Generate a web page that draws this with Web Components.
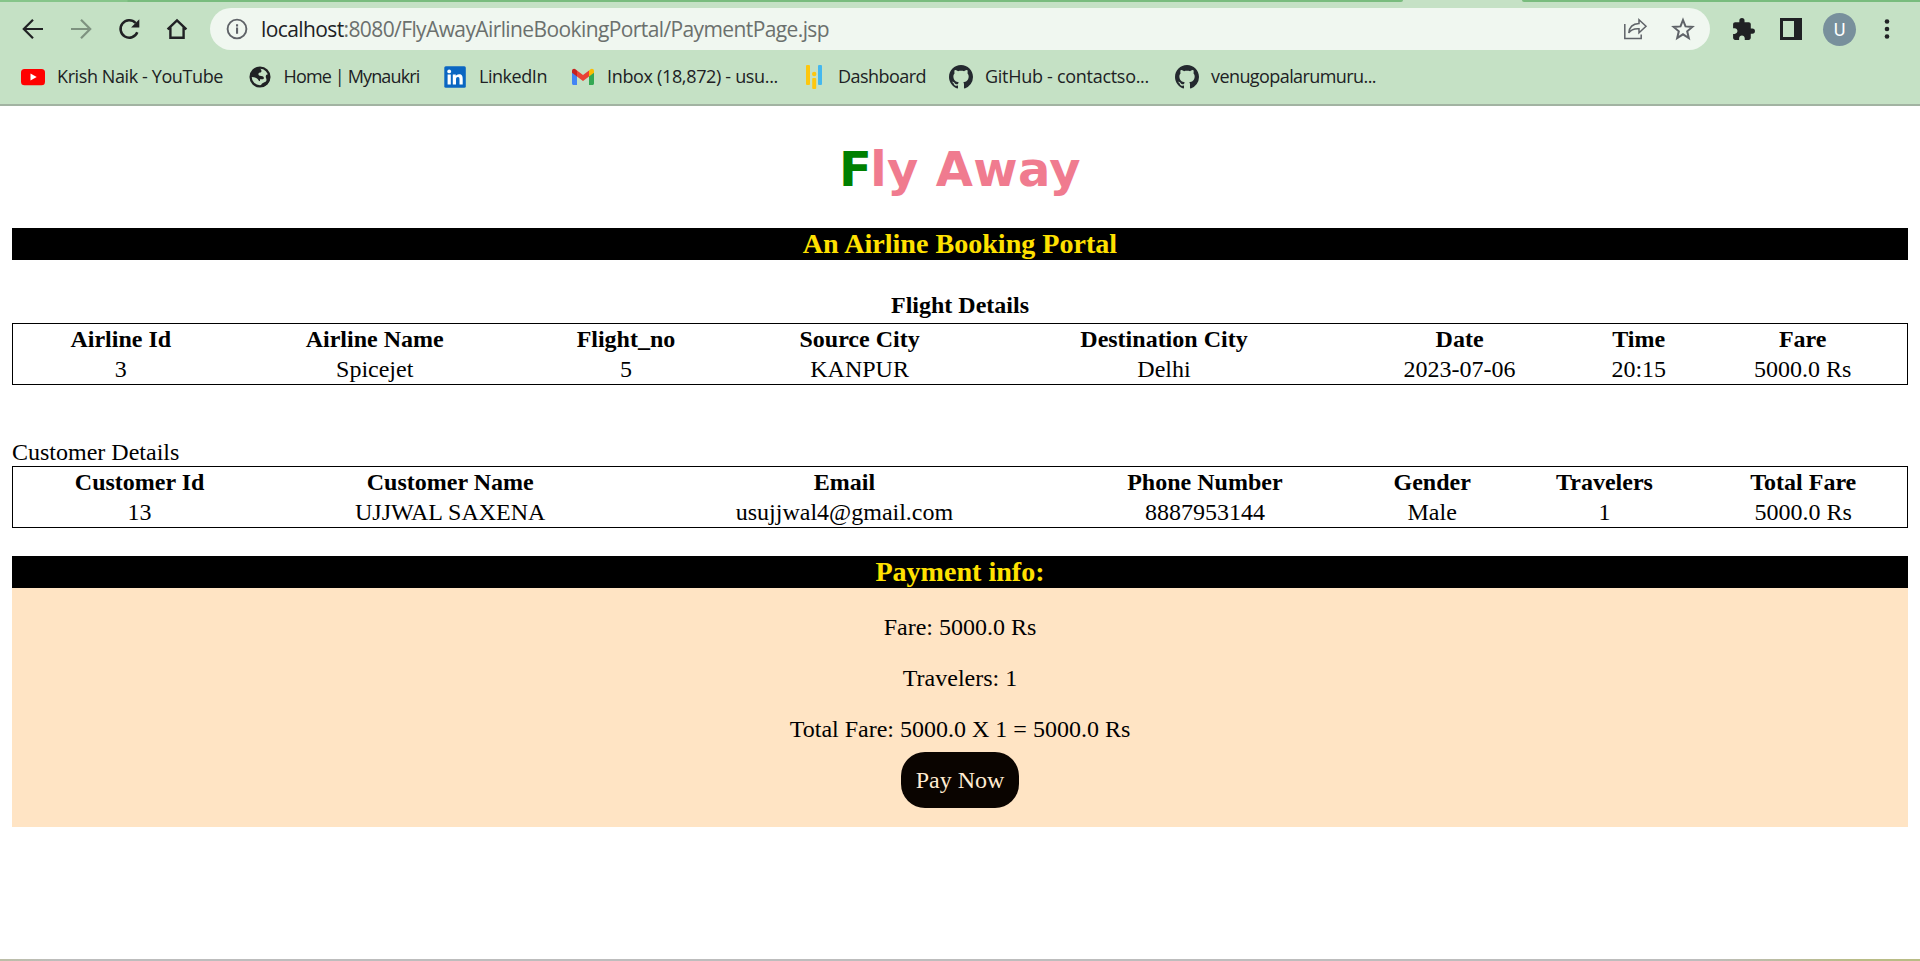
<!DOCTYPE html>
<html lang="en">
<head>
<meta charset="utf-8">
<title>Fly Away</title>
<style>
html,body{margin:0;height:100%}
body{display:flex;flex-direction:column;overflow:hidden;background:#fff;color:#000;font-family:"Liberation Serif","Times New Roman",serif}
</style>
</head>
<body>
<browser-chrome></browser-chrome>
<payment-page></payment-page>
<window-edge></window-edge>
<script>
const ICONS = {
  back:'<svg width="24" height="24" viewBox="0 0 24 24" fill="none" stroke="#202124" stroke-width="2.2"><path d="M22 12H3.2M12 2.8L2.8 12l9.2 9.2"/></svg>',
  forward:'<svg width="24" height="24" viewBox="0 0 24 24" fill="none" stroke="#7e9280" stroke-width="2.2"><path d="M2 12h18.8M12 2.8l9.2 9.2-9.2 9.2"/></svg>',
  reload:'<svg width="24" height="24" viewBox="0 0 24 24"><path d="M20.3 15.3A8.7 8.7 0 1 1 18.6 6" fill="none" stroke="#202124" stroke-width="2.5"/><path d="M22.3 2.3v8.2h-8.2z" fill="#202124"/></svg>',
  home:'<svg width="24" height="24" viewBox="0 0 24 24" fill="none" stroke="#202124" stroke-width="2.4"><path d="M2.6 12.4L12 3.4l9.4 9M5.4 10.5v10.3h13.2V10.5"/></svg>',
  info:'<svg width="24" height="24" viewBox="0 0 24 24"><circle cx="12" cy="12" r="9.4" fill="none" stroke="#5f6368" stroke-width="1.9"/><path d="M11 10.6h2.1v6.2H11zM11 7.2h2.1v2.2H11z" fill="#5f6368"/></svg>',
  share:'<svg width="26" height="26" viewBox="0 0 26 26" fill="none" stroke="#5f6368" stroke-width="1.5"><path d="M2.8 8v14.6h16.4v-4.2"/><path d="M17 3.8l7 6.5-7 6.5v-4.1c-4.800-.3-8.200.8-10.200 4.300.4-5.800 4.200-9.200 10.200-9.500z"/></svg>',
  star:'<svg width="26" height="26" viewBox="0 0 26 26" fill="none" stroke="#5f6368" stroke-width="2"><path d="M13 4l2.500 6.400 6.900.5-5.200 4.400 1.600 6.700L13 18.300 7.200 22l1.600-6.700-5.200-4.400 6.900-.5z"/></svg>',
  puzzle:'<svg width="25" height="25" viewBox="0 0 24 24" fill="#202124"><path d="M20.500 11H19V7c0-1.100-.9-2-2-2h-4V3.500a2.500 2.500 0 0 0-5 0V5H4c-1.100 0-1.990.9-1.990 2v3.800H3.500c1.490 0 2.700 1.210 2.700 2.700s-1.210 2.700-2.700 2.700H2V20c0 1.100.9 2 2 2h3.800v-1.500c0-1.490 1.210-2.700 2.700-2.700s2.700 1.210 2.700 2.700V22H17c1.100 0 2-.9 2-2v-4h1.500a2.500 2.500 0 0 0 0-5z"/></svg>',
  panel:'<svg width="22" height="22" viewBox="0 0 22 22"><path fill="#202124" fill-rule="evenodd" d="M0 0h22v22H0zM3 3v16h11V3z"/></svg>',
  dots:'<svg width="6" height="24" viewBox="0 0 6 24" fill="#202124"><circle cx="3" cy="4.500" r="2.300"/><circle cx="3" cy="12" r="2.300"/><circle cx="3" cy="19.500" r="2.300"/></svg>',
  youtube:'<svg width="24" height="24" viewBox="0 0 24 24"><rect y="4" width="24" height="16.200" rx="3.500" fill="#f00"/><path d="M9.500 8.600v7l6.200-3.500z" fill="#fff"/></svg>',
  globe:'<svg width="24" height="24" viewBox="0 0 24 24"><circle cx="12" cy="12" r="9.400" fill="none" stroke="#202124" stroke-width="2.300"/><path fill="#202124" d="M11 2.500C6 3 2.500 7 2.500 12c2.500-.2 5 .3 6.500 1.500 1.500 1 1 2.200 3 2.700v-2h3c1.500-.5 1-2.500-.5-3-2-.6-3.500 0-4-1.500-.3-1.200.4-2 1.500-2.200 1.500-.2 1.600-1 1.300-2.200-.3-1.200-1-1.600-2.300-2.800zM21 9.500c-1.500-.5-3 .2-3.200 1.700-.3 1.500.8 2.300.7 3.800-.1 1.600-1.400 2-2.500 2.500-1.500.6-3 1.500-3.500 4C17.500 22 22 18 21.500 12z"/></svg>',
  linkedin:'<svg width="24" height="24" viewBox="0 0 24 24"><rect x="1.300" y="1.300" width="21.500" height="21.500" rx="1.500" fill="#0a66c2"/><g fill="#fff"><circle cx="6.200" cy="6.400" r="1.900"/><path d="M4.600 9.600h3.200v10H4.600zM9.800 9.600h3v1.400c.6-1 1.700-1.700 3.200-1.700 3.100 0 3.700 2 3.700 4.700v5.600h-3.200v-5c0-1.200 0-2.600-1.600-2.600s-1.900 1.200-1.900 2.500v5.100H9.800z"/></g></svg>',
  gmail:'<svg width="24" height="24" viewBox="0 0 24 24"><path d="M1 7v11.500c0 .9.700 1.500 1.500 1.500H6v-9.500z" fill="#4285f4"/><path d="M18 10.500V20h3.500c.9 0 1.500-.7 1.500-1.500V7z" fill="#34a853"/><path d="M18 5.600v5.900L23 7.800V6c0-2-2.200-3-3.800-1.500z" fill="#fbbc04"/><path d="M6 11.500V5.600l6 4.500 6-4.500v5.900l-6 4.500z" fill="#ea4335"/><path d="M1 6v1.800l5 3.700V5.600L4.800 4.500C3.200 3.200 1 4 1 6z" fill="#c5221f"/></svg>',
  dash:'<svg width="24" height="24" viewBox="0 0 24 24"><g fill="#fdc70f"><rect x="4" y="0" width="4" height="20" rx="1"/><circle cx="12.200" cy="9" r="2.200"/><rect x="10.200" y="13" width="4" height="11" rx="1"/></g><rect x="16" y="0" width="4" height="20" rx="1" fill="#44b8ef"/></svg>',
  github:'<svg width="24" height="24" viewBox="0 0 16 16" fill="#24292f"><path d="M8 0C3.580 0 0 3.580 0 8c0 3.540 2.290 6.530 5.470 7.590.4.070.55-.17.55-.38 0-.19-.01-.82-.01-1.490-2.010.37-2.530-.49-2.690-.94-.09-.23-.48-.94-.82-1.130-.28-.15-.68-.52-.01-.53.63-.01 1.080.58 1.230.82.72 1.210 1.870.87 2.330.66.070-.52.28-.87.51-1.070-1.780-.2-3.640-.89-3.640-3.950 0-.87.31-1.590.82-2.150-.08-.2-.36-1.020.08-2.120 0 0 .67-.21 2.200.82.64-.18 1.320-.27 2-.27s1.360.09 2 .27c1.530-1.040 2.200-.82 2.200-.82.44 1.100.16 1.920.08 2.120.51.56.82 1.270.82 2.150 0 3.070-1.870 3.750-3.650 3.950.29.25.54.73.54 1.480 0 1.070-.01 1.930-.01 2.200 0 .21.15.46.55.38A8.010 8.010 0 0 0 16 8c0-4.420-3.580-8-8-8z"/></svg>'
};

function define(name, html, setup){
  customElements.define(name, class extends HTMLElement{
    connectedCallback(){
      if(this.shadowRoot) return;
      this.attachShadow({mode:'open'}).innerHTML = html;
      if(setup) setup.call(this, this.shadowRoot);
    }
  });
}

define('ui-icon', '<style>:host{display:flex;flex:none}svg{display:block}</style><div></div>', function(root){
  root.querySelector('div').innerHTML = ICONS[this.getAttribute('name')];
});

/* One line of text, tracked so that it fills the width given in its attribute. */
define('fit-text', '<style>:host{display:block;flex:none;white-space:nowrap}span{display:inline-block}</style><span><slot></slot></span>', function(root){
  const span = root.querySelector('span');
  const gap = this.getAttribute('width') - span.getBoundingClientRect().width;
  span.style.letterSpacing = (gap / this.textContent.length) + 'px';
});

define('bookmark-link', `<style>
:host{display:flex;align-items:center;color:#202124;font:18px/24px "Open Sans",sans-serif}
ui-icon{margin-right:12px}
slot{display:block;padding-bottom:2px}
</style><ui-icon></ui-icon><slot></slot>`, function(root){
  const old = root.querySelector('ui-icon'), icon = document.createElement('ui-icon');
  icon.setAttribute('name', this.getAttribute('icon'));
  old.replaceWith(icon);
});

define('tab-edge', `<style>
:host{display:flex;justify-content:space-between;height:2px;background:#c5e1c5}
i{background:#79bc7e}
.l{width:1403px;background:linear-gradient(90deg,#86c58a 127px,#79bc7e 128px);border-radius:0 0 3px 0}
.r{width:398px;border-radius:0 0 0 3px}
</style><i class="l"></i><i class="r"></i>`);

define('address-bar', `<style>
:host{display:flex;align-items:center;box-sizing:border-box;width:1500px;height:42px;border-radius:21px;background:#f0f7f0;padding:0 14px 0 15px;font:21px/28px "Open Sans",sans-serif;color:#6b706d}
b{font-weight:400;color:#202124}
fit-text{margin:0 auto 0 12px}
.share{margin-right:22px}
</style><ui-icon name="info"></ui-icon><fit-text width="568"><b>localhost</b>:8080/FlyAwayAirlineBookingPortal/PaymentPage.jsp</fit-text><ui-icon class="share" name="share"></ui-icon><ui-icon name="star"></ui-icon>`);

define('browser-chrome', `<style>
:host{display:block;flex:none;height:106px;box-sizing:border-box;border-bottom:2px solid #a2b3a2;background:#c5e1c5}
.nav{display:flex;align-items:center;height:54px;padding:0 30px 0 21px}
.nav>.n{margin-right:24px}
.nav>.h{margin-right:21px}
.tools{display:flex;align-items:center;margin-left:21px}
.avatar{width:33px;height:33px;margin:0 28px 0 21px;border-radius:50%;background:#78909c;color:#fff;text-align:center;font:18px/33px Roboto,sans-serif}
.marks{display:grid;grid-template-columns:226.500px 195.500px 128px 231px 147px 226px 240px;height:42px;padding-left:21px}
</style>
<tab-edge></tab-edge>
<div class="nav">
<ui-icon class="n" name="back"></ui-icon><ui-icon class="n" name="forward"></ui-icon><ui-icon class="n" name="reload"></ui-icon><ui-icon class="h" name="home"></ui-icon>
<address-bar></address-bar>
<div class="tools"><ui-icon name="puzzle"></ui-icon><ui-icon name="panel" style="margin-left:24px"></ui-icon><div class="avatar">U</div><ui-icon name="dots"></ui-icon></div>
</div>
<div class="marks">
<bookmark-link icon="youtube"><fit-text width="166">Krish Naik - YouTube</fit-text></bookmark-link>
<bookmark-link icon="globe"><fit-text width="136">Home | Mynaukri</fit-text></bookmark-link>
<bookmark-link icon="linkedin"><fit-text width="68">LinkedIn</fit-text></bookmark-link>
<bookmark-link icon="gmail"><fit-text width="171">Inbox (18,872) - usu...</fit-text></bookmark-link>
<bookmark-link icon="dash"><fit-text width="88">Dashboard</fit-text></bookmark-link>
<bookmark-link icon="github"><fit-text width="164">GitHub - contactso...</fit-text></bookmark-link>
<bookmark-link icon="github"><fit-text width="165">venugopalarumuru...</fit-text></bookmark-link>
</div>`);

define('section-bar', '<style>:host{display:block;height:32px;background:#000;color:#ffe100;text-align:center;font-weight:700;font-size:28.080px;line-height:32px}</style><slot></slot>');

define('detail-table', `<style>
:host{display:block;box-sizing:border-box;height:62px;border:1px solid #000;font-size:24px;line-height:30px}
.row{display:grid;grid-template-columns:var(--cols);text-align:center;white-space:nowrap}
.head{font-weight:700}
</style><div class="row head"></div><div class="row"></div>`, function(root){
  const rows = root.querySelectorAll('.row');
  ['heads','cells'].forEach((key, i) => this.getAttribute(key).split(';').forEach(text => {
    const cell = document.createElement('span');
    cell.textContent = text;
    rows[i].append(cell);
  }));
});

define('pay-button', '<style>:host{display:block;box-sizing:border-box;width:118px;height:56px;border-radius:24px;background:#0a0400;color:#ffebd2;text-align:center;font-size:24px;line-height:56px}</style><slot></slot>');

define('payment-page', `<style>
:host{display:block;flex:1;padding:0 12px;font-size:24px;line-height:28px}
h1{margin:0;padding:35px 0 31px;font:700 48px/56px "DejaVu Sans",Verdana,sans-serif;color:#f07b8f;text-align:center;display:flex;justify-content:center;white-space:pre}
h1 b{color:green;margin-right:-2px}
.cap{padding-top:31px;height:32px;font-weight:700;text-align:center}
.cust{padding-top:53px;height:28px}
.pay{margin-top:28px}
.body{display:flex;flex-direction:column;align-items:center;height:239px;background:#ffe4c4}
.body p{margin:0 0 23px}
.body p:first-child{margin-top:25px}
.body p.last{margin-bottom:9px}
.flight{--cols:215.600px 292.200px 210.400px 256.800px 352px 239.200px 119.200px 1fr}
.customer{--cols:253.200px 368px 420.600px 300.200px 154.400px 190.200px 1fr}
</style>
<h1><fit-text width="242"><b>F</b>ly Away</fit-text></h1>
<section-bar>An Airline Booking Portal</section-bar>
<div class="cap">Flight Details</div>
<detail-table class="flight" heads="Airline Id;Airline Name;Flight_no;Source City;Destination City;Date;Time;Fare" cells="3;Spicejet;5;KANPUR;Delhi;2023-07-06;20:15;5000.0 Rs"></detail-table>
<div class="cust">Customer Details</div>
<detail-table class="customer" heads="Customer Id;Customer Name;Email;Phone Number;Gender;Travelers;Total Fare" cells="13;UJJWAL SAXENA;usujjwal4@gmail.com;8887953144;Male;1;5000.0 Rs"></detail-table>
<section-bar class="pay">Payment info:</section-bar>
<div class="body"><p>Fare: 5000.0 Rs</p><p>Travelers: 1</p><p class="last">Total Fare: 5000.0 X 1 = 5000.0 Rs</p><pay-button>Pay Now</pay-button></div>`);

define('window-edge', '<style>:host{display:block;flex:none;height:2px;background:linear-gradient(90deg,#bcbea6,#bdbdbd 60px,#bdbdbd 1700px,#b9bc86 1860px)}</style>');
</script>
</body>
</html>
